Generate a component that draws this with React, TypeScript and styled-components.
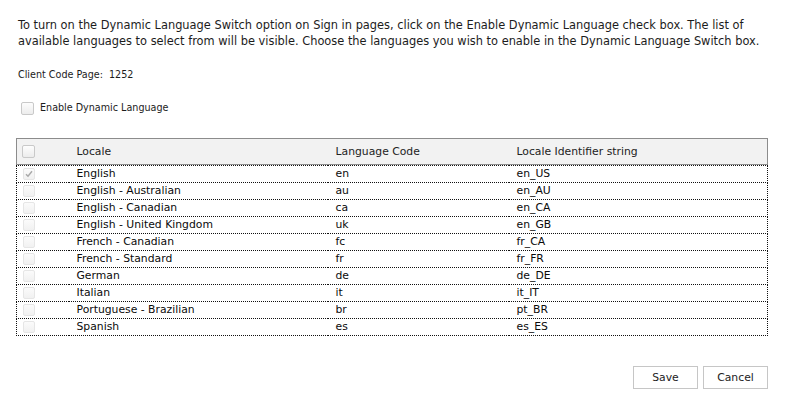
import React from 'react';
import styled, { createGlobalStyle } from 'styled-components';

const GlobalStyle = createGlobalStyle`
  html, body {
    margin: 0;
    padding: 0;
    background: #ffffff;
  }
  body {
    font-family: Tahoma, "DejaVu Sans", "Liberation Sans", sans-serif;
    color: #222;
  }
`;

const Page = styled.div`
  width: 785px;
  height: 405px;
  box-sizing: border-box;
  padding: 17px 17px 0 16px;
  display: flex;
  flex-direction: column;
`;

const Intro = styled.p`
  margin: 0 0 0 2px;
  font-size: 11.4px;
  line-height: 16px;
  color: #1c1c1c;
  white-space: nowrap;
`;

const CodePage = styled.div`
  margin: 19px 0 0 2px;
  font-size: 9.6px;
  line-height: 14px;
  color: #1c1c1c;
`;

const EnableRow = styled.label`
  margin: 19px 0 0 5px;
  display: flex;
  align-items: center;
  gap: 6px;
  font-size: 9.6px;
  line-height: 14px;
  color: #1c1c1c;
`;

const Box = styled.span<{ $faint?: boolean }>`
  display: inline-flex;
  align-items: center;
  justify-content: center;
  width: ${(p) => (p.$faint ? 10 : 11)}px;
  height: ${(p) => (p.$faint ? 10 : 11)}px;
  border: 1px solid ${(p) => (p.$faint ? '#e6e6e6' : '#c9c9c9')};
  border-radius: 2px;
  background: ${(p) =>
    p.$faint ? 'linear-gradient(#fbfbfb, #f1f1f1)' : 'linear-gradient(#fdfdfd, #ececec)'};
  flex: none;
  vertical-align: middle;
`;

const Table = styled.table`
  margin-top: 23px;
  width: 752px;
  border-collapse: collapse;
  table-layout: fixed;
  font-size: 10.8px;
`;

const HeadCell = styled.th<{ $w?: number }>`
  box-sizing: border-box;
  width: ${(p) => (p.$w ? `${p.$w}px` : 'auto')};
  height: 26px;
  padding: 0 0 0 8px;
  text-align: left;
  font-weight: normal;
  color: #222;
  background: #f2f2f2;
  border-top: 1px solid #8c8c8c;
  border-bottom: 1px solid #8c8c8c;
  &:first-child {
    border-left: 1px solid #8c8c8c;
    padding-left: 5px;
  }
  &:last-child {
    border-right: 1px solid #8c8c8c;
  }
`;

const Row = styled.tr`
  & td {
    box-sizing: border-box;
    height: 17px;
    padding: 0 0 0 8px;
    border-top: 1px dotted #111;
    border-bottom: 1px dotted #111;
    color: #0a0a0a;
    line-height: 14px;
    white-space: nowrap;
  }
  & td:first-child {
    border-left: 1px dotted #111;
    padding-left: 6px;
  }
  & td:last-child {
    border-right: 1px dotted #111;
  }
`;

const Gap = styled.tr`
  height: 1px;
`;

const Actions = styled.div`
  margin-top: 30px;
  display: flex;
  justify-content: flex-end;
  gap: 5px;
`;

const Button = styled.button`
  width: 65px;
  height: 23px;
  padding: 0;
  border: 1px solid #c6c6c6;
  background: #fff;
  font-family: inherit;
  font-size: 10.8px;
  color: #222;
`;

const Check = () => (
  <svg width="8" height="8" viewBox="0 0 8 8">
    <path d="M1 4.2 L3 6.3 L7 1.2" fill="none" stroke="#a8a8a8" strokeWidth="1.4" />
  </svg>
);

const locales = [
  ['English', 'en', 'en_US'],
  ['English - Australian', 'au', 'en_AU'],
  ['English - Canadian', 'ca', 'en_CA'],
  ['English - United Kingdom', 'uk', 'en_GB'],
  ['French - Canadian', 'fc', 'fr_CA'],
  ['French - Standard', 'fr', 'fr_FR'],
  ['German', 'de', 'de_DE'],
  ['Italian', 'it', 'it_IT'],
  ['Portuguese - Brazilian', 'br', 'pt_BR'],
  ['Spanish', 'es', 'es_ES'],
];

export default function App() {
  return (
    <>
      <GlobalStyle />
      <Page>
        <Intro>
          To turn on the Dynamic Language Switch option on Sign in pages, click on the Enable Dynamic Language check box. The list of
          <br />
          available languages to select from will be visible. Choose the languages you wish to enable in the Dynamic Language Switch box.
        </Intro>
        <CodePage>Client Code Page:&nbsp; 1252</CodePage>
        <EnableRow>
          <Box />
          Enable Dynamic Language
        </EnableRow>
        <Table>
          <thead>
            <tr>
              <HeadCell $w={52}>
                <Box />
              </HeadCell>
              <HeadCell $w={259}>Locale</HeadCell>
              <HeadCell $w={181}>Language Code</HeadCell>
              <HeadCell>Locale Identifier string</HeadCell>
            </tr>
          </thead>
          <tbody>
            <Gap />
            {locales.map(([name, code, id], i) => (
              <Row key={id}>
                <td>
                  <Box $faint>{i === 0 && <Check />}</Box>
                </td>
                <td>{name}</td>
                <td>{code}</td>
                <td>{id}</td>
              </Row>
            ))}
          </tbody>
        </Table>
        <Actions>
          <Button>Save</Button>
          <Button>Cancel</Button>
        </Actions>
      </Page>
    </>
  );
}
